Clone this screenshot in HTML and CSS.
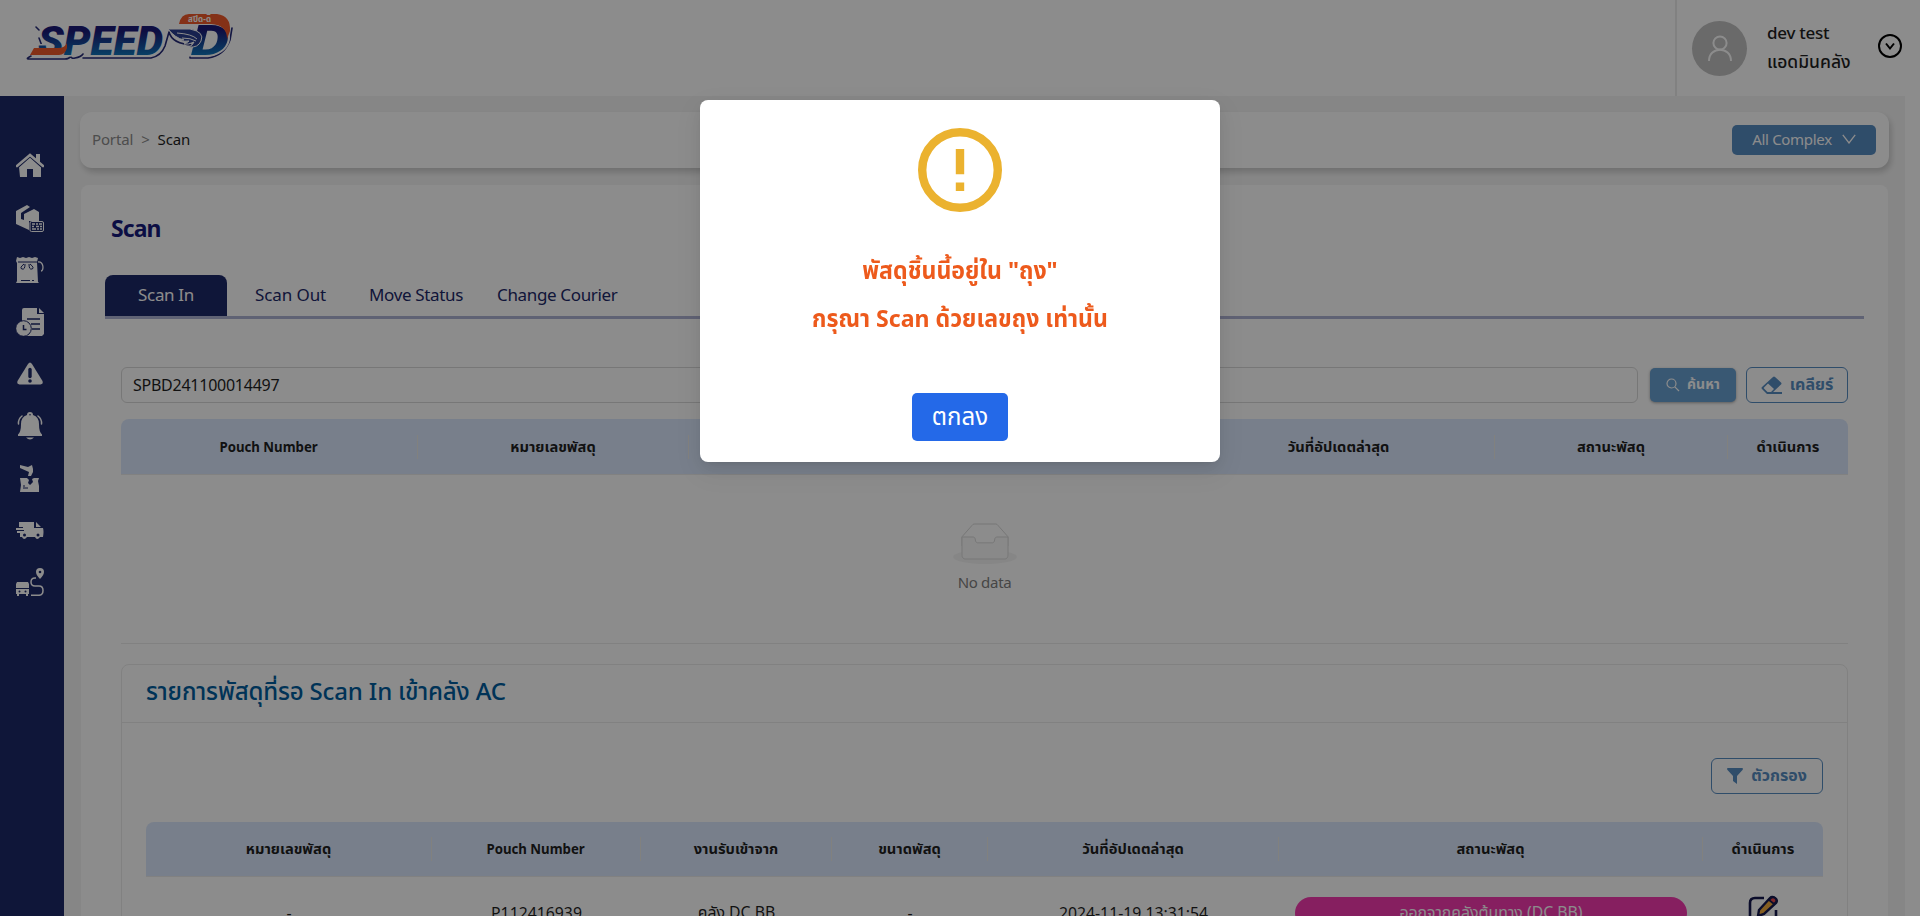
FILE: index.html
```html
<!DOCTYPE html>
<html lang="th">
<head>
<meta charset="utf-8">
<title>Speed-D Portal</title>
<link rel="stylesheet" href="styles.css">
</head>
<body>
<div class="app">
  <header class="topbar">
    <svg class="logo" width="212" height="56" viewBox="0 0 212 56">
      <defs>
        <linearGradient id="ink" x1="0" y1="0" x2="0" y2="1"><stop offset="0.3" stop-color="#1b1a78"/><stop offset="0.85" stop-color="#0f7dc0"/></linearGradient>
      </defs>
      <g fill="none" stroke="#252a78" stroke-width="1.6" stroke-linecap="round" stroke-linejoin="round">
        <path d="M15 18l3 3M18 29l3 8M10 47q-6 3-2 3h36q4 0 6-3 0 3 4 2 6-1 8-4M62 49h68q10-2 14-12l4-14M148 23q3 12 24 13M169 47v2h18q16-2 22-18l2-12"/>
      </g>
      <g class="logo-type">
        <text x="17" y="46" textLength="125" lengthAdjust="spacingAndGlyphs" font-size="41" stroke="#fff" stroke-width="3" paint-order="stroke" fill="url(#ink)">SPEED</text>
        <text x="170" y="46" textLength="38" lengthAdjust="spacingAndGlyphs" font-size="43" stroke="#fff" stroke-width="3" paint-order="stroke" fill="url(#ink)">D</text>
      </g>
      <path d="M13 39h24q7 0 9-5v5q-2 7-8 7H9z" fill="#f15a2b"/>
      <path d="M158 15q2-10 10-10h28q14 2 13 17l-3 8q0-14-16-15z" fill="#f15a2b"/>
      <path d="M147 20h22q15 3 11 12-3 7-12 6 4-2 5-5-6 3-10 2 3-1 5-3-6 1-10-1h5q-9-2-16-11z" fill="#2b3f91" stroke="#fff" stroke-width="1"/>
      <path d="M156 24q15 1 20 6M161 29q9 0 14 3" stroke="#fff" stroke-width="1" fill="none"/>
      <text class="logo-th" x="167" y="12.500" textLength="23">สปีด-ดี</text>
    </svg>
    <div class="user">
      <span class="avatar"><svg width="26" height="27" viewBox="0 0 26 27" fill="none" stroke="#fff" stroke-width="2"><circle cx="13" cy="8" r="6.6"/><path d="M2 26c0-15 22-15 22 0"/></svg></span>
      <div class="user-name"><div class="user-login">dev test</div><div class="user-role">แอดมินคลัง</div></div>
      <svg class="user-caret" width="24" height="24" viewBox="0 0 24 24" fill="none" stroke="#000" stroke-width="2"><circle cx="12" cy="12" r="11"/><path d="M8 9.5l4 5 4-5"/></svg>
    </div>
  </header>
  <div class="body">
    <nav class="side">
      <svg viewBox="0 0 28 28"><path d="M3 15L14 5l11 10v10h-8v-8h-6v8H4z"/><path d="M1 14.500L14 3l13 11.500" fill="none" stroke="#1d2869" stroke-width="4"/><path d="M1 14L14 3l13 11" fill="none" stroke="#fff" stroke-width="2.600" stroke-linecap="round"/><path d="M20 2h4v9l-4-3z"/></svg>
      <svg viewBox="0 0 28 28"><path d="M0 7L11 1l3 2-9 6v6l3 1v-6l10-5 5 3v9H13v9L0 20z"/><rect x="14" y="17.500" width="13.500" height="10" rx="1.500" fill="#1d2869" stroke="#fff"/><path d="M16 20h3m1 0h2m1 0h3M16 22.500h2m2 0h3m1 0h2M16 25h4m1 0h2m1 0h2" stroke="#fff" stroke-width="1.500"/></svg>
      <svg viewBox="0 0 28 28"><path d="M1 1l3 1 3-1 3 1 3-1 3 1 3-1 3 1-1 4 1 20 1 1H0l1-2V7L0 5z"/><path d="M2 6h20M5 24.500h9M16 24.500h2" stroke="#1d2869"/><path d="M8 8q-5 4-2 5t3-5M14 8q5 4 2 5t-3-5" fill="none" stroke="#1d2869"/><path d="M22 6c6-1 6 9 3 9" fill="none" stroke="#fff" stroke-width="1.300"/></svg>
      <svg viewBox="0 0 28 28"><path d="M8 0h13v6h7v20l-2 2H8a2 2 0 0 1-2-2V2q0-2 2-2z"/><path d="M23 0l5 5h-5z"/><path d="M11 11h13M15 16h9M16 21h8" stroke="#1d2869" stroke-width="1.300"/><circle cx="7.500" cy="20.500" r="7.800" stroke="#1d2869"/><path d="M7.500 17v4.500h3" fill="none" stroke="#1d2869" stroke-width="1.500"/></svg>
      <svg viewBox="0 0 28 28"><path d="M12 4q2-3 4 0l10.500 17q1 3-2 3.500H3.500q-3-.5-2-3.500z"/><path d="M14 9.500v7" stroke="#1d2869" stroke-width="3.400" stroke-linecap="round"/><circle cx="14" cy="21" r="1.800" fill="#1d2869"/></svg>
      <svg viewBox="0 0 28 28"><path d="M14 0q3 0 3 3 6 2 6 9 0 8 3 10.500v1.500H2v-1.500Q5 20 5 12q0-7 6-9 0-3 3-3z"/><path d="M10 25.500h8q-4 4-8 0"/><circle cx="14" cy="2.800" r=".8" fill="#1d2869"/><path d="M6 4Q2 7 2.500 12M22 4q4 3 3.500 8" fill="none" stroke="#fff" stroke-width="1.500" stroke-linecap="round"/></svg>
      <svg viewBox="0 0 28 28"><path d="M4 1l8 2 4-2 1 4 0 3-2 4h-3l1-4-9-4zM4 14h7l2 2-1 3 2 2 3-3-1-3 2-1h5l-1 3 1 5v6H4l1-7z"/><path d="M7 24h5M7 22h2" stroke="#1d2869"/></svg>
      <svg viewBox="0 0 28 28"><path d="M3 6h15v6h9q1 3 0 9h-3q-3 4-5 0h-8q-3 4-5 0H4v-4H1v-2h7v-1H0v-2h7v-1H3zM20 6l5 5h-5z"/><circle cx="8.500" cy="19" r="1.500" fill="#1d2869"/><circle cx="22" cy="19" r="1.500" fill="#1d2869"/></svg>
      <svg viewBox="0 0 28 28"><path d="M1 14h11l1 2v4H0v-4zM0 21h13v5h-1v2h-2v-2H3v2H1v-2H0z"/><circle cx="3.500" cy="23.500" r="1" fill="#1d2869"/><circle cx="9.500" cy="23.500" r="1" fill="#1d2869"/><path d="M24 0a4 4 0 0 1 4 4q0 3-4 7-4-4-4-7a4 4 0 0 1 4-4z"/><circle cx="24" cy="4" r="1.300" fill="#1d2869"/><path d="M20 10h-1q-4 0-4 4t4 4h4q4 0 4 4.500T23 27.300h-8" fill="none" stroke="#fff" stroke-width="1.500"/></svg>
    </nav>
    <main class="content">
      <div class="crumbs">
        <div class="crumb-path"><span class="muted">Portal</span><span class="muted">&gt;</span><span>Scan</span></div>
        <button class="complex"><span>All Complex</span><svg width="14" height="10" viewBox="0 0 14 10" fill="none" stroke="#fff" stroke-width="1.300"><path d="M.8.800L7 9 13.200.800"/></svg></button>
      </div>
      <section class="panel">
        <h1 class="page-title">Scan</h1>
        <div class="tabs">
          <div class="tab active">Scan In</div><div class="tab t2">Scan Out</div><div class="tab t3">Move Status</div><div class="tab t4">Change Courier</div>
        </div>
        <div class="inner">
          <div class="search">
            <div class="field">SPBD241100014497</div>
            <button class="find"><svg width="14" height="14" viewBox="0 0 14 14" fill="none" stroke="#fff" stroke-width="1.200"><circle cx="5.500" cy="5.500" r="4.500"/><path d="M8.800 8.800L13 13"/></svg><span>ค้นหา</span></button>
            <button class="clear"><svg width="21" height="19" viewBox="0 0 21 19"><path d="M12 1q1-1 2 0l6 5.500q1 1 0 2L12 16h9v2H6l-5-5q-1-1 0-2zM7 7.500l-4 4q-.5.500 0 1l3.500 3.500H10l3-3z" fill="#578cc1" fill-rule="evenodd"/></svg><span>เคลียร์</span></button>
          </div>
          <div class="thead grid-a"><div><span class="narrow">Pouch Number</span></div><div>หมายเลขพัสดุ</div><div></div><div>วันที่อัปเดตล่าสุด</div><div>สถานะพัสดุ</div><div>ดำเนินการ</div></div>
          <div class="empty">
            <svg width="64" height="41" viewBox="0 0 64 41"><g transform="translate(0 1)" fill="none" fill-rule="evenodd"><ellipse fill="#f5f5f5" cx="32" cy="33" rx="32" ry="7"/><g stroke="#d9d9d9"><path d="M55 12.760L44.854 1.258C44.367.474 43.656 0 42.907 0H21.093c-.749 0-1.460.474-1.947 1.257L9 12.761V22h46v-9.240z"/><path fill="#fafafa" d="M41.613 15.931c0-1.605.994-2.930 2.227-2.931H55v18.137C55 33.260 53.680 35 52.050 35h-40.100C10.320 35 9 33.259 9 31.137V13h11.160c1.233 0 2.227 1.323 2.227 2.928v.022c0 1.605 1.005 2.901 2.237 2.901h14.752c1.232 0 2.237-1.308 2.237-2.913v-.007z"/></g></g></svg>
            <span>No data</span>
          </div>
          <div class="card">
            <div class="card-head">รายการพัสดุที่รอ Scan In เข้าคลัง AC</div>
            <div class="card-body">
              <button class="filter"><svg width="16" height="16" viewBox="0 0 16 16"><path d="M.5 0h15q.8 1 0 2L10 8v8l-4-3V8L.5 2q-.8-1 0-2z" fill="#578cc1"/></svg><span>ตัวกรอง</span></button>
              <div class="thead grid-b"><div>หมายเลขพัสดุ</div><div><span class="narrow">Pouch Number</span></div><div>งานรับเข้าจาก</div><div>ขนาดพัสดุ</div><div>วันที่อัปเดตล่าสุด</div><div>สถานะพัสดุ</div><div>ดำเนินการ</div></div>
              <div class="row grid-b"><div>-</div><div>P112416939</div><div>คลัง DC BB</div><div>-</div><div>2024-11-19 13:31:54</div><div><span class="pill">ออกจากคลังต้นทาง (DC BB)</span></div><div><svg width="32" height="32" viewBox="0 0 32 32" fill="none"><path d="M17 3H8Q3 3 3 8v17q0 4 4 4h18q4 0 4-4V15" stroke="#14194f" stroke-width="2.600"/><path d="M11 21l1-6L23 3q2-2 5 0t1 5L17 19z" fill="#f2ab3c" stroke="#14194f" stroke-width="2.400"/><path d="M22 5l2-2q2-1.500 4 0t1 4l-2 2z" fill="#e5484d" stroke="#14194f" stroke-width="1.800"/></svg></div></div>
            </div>
          </div>
        </div>
      </section>
    </main>
  </div>
</div>
<div class="mask">
  <div class="modal">
    <svg class="warn" width="84" height="84" viewBox="0 0 84 84"><circle cx="42" cy="42" r="37.800" fill="none" stroke="#ebb22f" stroke-width="8.400"/><path d="M37.800 21h8.400v25.200h-8.400zM37.800 54.600h8.400V63h-8.400z" fill="#ebb22f"/></svg>
    <p>พัสดุชิ้นนี้อยู่ใน "ถุง"</p>
    <p>กรุณา Scan ด้วยเลขถุง เท่านั้น</p>
    <button class="ok">ตกลง</button>
  </div>
</div>
</body>
</html>
```
FILE: styles.css
```css
* { box-sizing: border-box; }
body { margin: 0; background: #fff; color: #1f1f1f; font-family: "Noto Sans", "Noto Sans Thai", sans-serif; font-size: 16px; }
button { font: inherit; margin: 0; padding: 0; border: 0; }
svg { display: block; flex: none; }
span { white-space: nowrap; }
.app { height: 916px; overflow: hidden; }
.topbar { height: 96px; display: flex; justify-content: space-between; background: #fff; }
.logo { margin: 9px 0 0 21px; overflow: visible; }
.logo-type { font-family: Roboto, "Liberation Sans", sans-serif; font-weight: 900; font-style: italic; }
.logo-th { font-size: 8px; font-weight: 700; fill: #fff; }
.user { width: 245px; border-left: 2px solid #ececec; display: flex; align-items: center; padding-left: 15px; }
.avatar { width: 55px; height: 55px; border-radius: 50%; background: #c1c1c1; display: flex; align-items: center; justify-content: center; }
.user-name { width: 111px; margin: -3px 0 0 20px; font-size: 17px; line-height: 28px; font-weight: 500; white-space: nowrap; }
.user-login { letter-spacing: -.25px; }
.user-role { font-size: 17.5px; }
.user-caret { margin-top: -4px; }
.body { display: flex; height: 820px; }
.side { width: 64px; background: #1d2869; padding: 56px 0 0 16px; display: flex; flex-direction: column; gap: 24px; }
.side svg { width: 28px; height: 28px; fill: #fff; }
.content { width: 1841px; background: #f5f5f5; padding: 16px 16px 0; }
.crumbs { height: 56px; border-radius: 12px; background: #fff; box-shadow: 2px 4px 6px rgba(0,0,0,.18); display: flex; align-items: center; justify-content: space-between; padding: 0 13px 0 12px; }
.crumb-path { display: flex; gap: 8px; font-size: 15px; letter-spacing: -.15px; padding-bottom: 2px; }
.muted { color: #8c8c8c; }
.complex { width: 144px; height: 30px; border-radius: 5px; background: #578cc1; color: #fff; display: flex; align-items: center; justify-content: center; gap: 10px; font-size: 15px; letter-spacing: -.3px; padding-bottom: 2px; }
.panel { height: 760px; margin: 17px 1px 0; border-radius: 8px; background: #fff; padding: 0 24px; overflow: hidden; }
.page-title { margin: 0; height: 90px; line-height: 87px; padding-left: 6px; font-size: 23px; letter-spacing: -.9px; font-weight: 700; color: #161b7c; }
.tabs { height: 44px; border-bottom: 3px solid #aeb2d3; display: flex; color: #1d2869; font-size: 17px; line-height: 40px; letter-spacing: -.35px; }
.tab.active { width: 122px; background: #1d2869; color: #fff; border-radius: 8px 8px 0 0; text-align: center; }
.t2 { width: 142px; padding-left: 28px; letter-spacing: -.1px; }
.t3 { width: 128px; }
.t4 { width: 130px; }
.inner { padding: 48px 16px 0; }
.search { display: flex; height: 36px; }
.field { width: 1517px; height: 36px; border: 1px solid #d9d9d9; border-radius: 6px; padding-left: 11px; line-height: 34px; letter-spacing: -.25px; }
.find { width: 86px; height: 34px; margin: 1px 10px 0 12px; border-radius: 5px; background: #68a0d1; color: #fff; display: flex; align-items: center; justify-content: center; gap: 7px; padding-bottom: 1px; font-weight: 700; font-size: 14px; box-shadow: 0 1px 3px rgba(0,0,0,.35); }
.clear, .filter { border: 1.500px solid #578cc1; border-radius: 6px; background: #fff; color: #578cc1; display: flex; align-items: center; justify-content: center; gap: 8px; font-weight: 700; height: 36px; }
.clear { width: 102px; }
.thead { height: 56px; margin-top: 16px; border-bottom: 1px solid #ececec; border-radius: 8px 8px 0 0; background: #dbe8fd; font-weight: 700; font-size: 14.7px; align-items: center; }
.thead div { height: 24px; line-height: 22px; text-align: center; border-right: 1px solid #ecebe8; }
.thead div:last-child { border: 0; }
.narrow { display: inline-block; transform: scaleX(.9); }
.grid-a { display: grid; grid-template-columns: 297px 271px 494px 312px 233px 120px; }
.grid-b { display: grid; grid-template-columns: 286px 209px 191px 156px 291px 424px 120px; }
.empty { height: 169px; border-bottom: 1px solid #ececec; display: flex; flex-direction: column; align-items: center; padding-top: 48px; color: #808080; font-size: 15px; gap: 8px; letter-spacing: -.3px; }
.card { height: 300px; margin-top: 20px; border: 1px solid #ececec; border-radius: 8px; }
.card-head { height: 58px; line-height: 52px; border-bottom: 1px solid #ececec; padding-left: 24px; font-size: 24px; letter-spacing: -.15px; font-weight: 500; color: #005d9e; }
.card-body { padding: 35px 24px 0; }
.filter { width: 112px; margin-left: auto; }
.card-body .thead { margin-top: 28px; height: 55px; }
.row { height: 71px; align-items: center; text-align: center; font-size: 15.8px; }
.row svg { margin: -4px auto 0; }
.pill { display: block; width: 392px; height: 32px; line-height: 31px; margin: 0 auto; border-radius: 16px; background: #f53ab0; color: #fff; }
.mask { position: fixed; inset: 0; background: rgba(0,0,0,.45); padding-top: 100px; }
.modal { width: 520px; height: 362px; margin: 0 auto; padding-top: 28px; background: #fff; border-radius: 8px; box-shadow: 0 6px 16px rgba(0,0,0,.08), 0 3px 6px -4px rgba(0,0,0,.12), 0 9px 28px 8px rgba(0,0,0,.05); text-align: center; color: #ed5a1c; font-size: 24px; font-weight: 700; }
.warn { margin: 0 auto 34px; }
.modal p { margin: 0; height: 48px; line-height: 48px; transform: scaleX(.962); }
.ok { width: 96px; height: 48px; margin-top: 51px; border-radius: 5px; background: #2469e8; color: #fff; font-size: 24px; font-weight: 400; }
```
